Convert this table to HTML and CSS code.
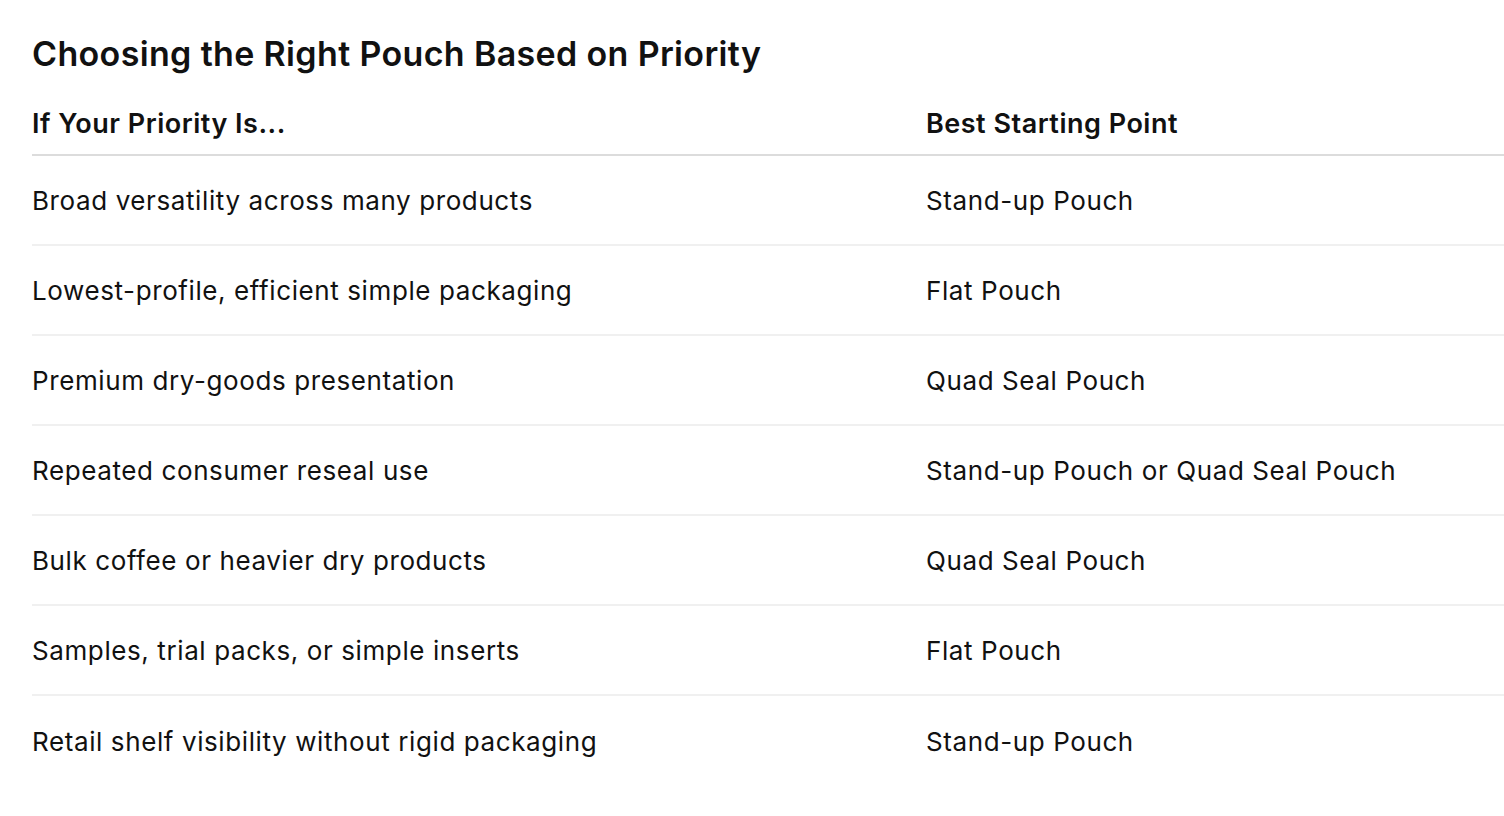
FILE: index.html
```html
<!DOCTYPE html>
<html>
<head>
<meta charset="utf-8">
<link rel="stylesheet" href="styles.css">
</head>
<body>
<div class="page">
  <h2 class="title">Choosing the Right Pouch Based on Priority</h2>
  <div class="table">
    <div class="row head">
      <div class="cell">If Your Priority Is...</div>
      <div class="cell">Best Starting Point</div>
    </div>
    <div class="row">
      <div class="cell">Broad versatility across many products</div>
      <div class="cell">Stand-up Pouch</div>
    </div>
    <div class="row">
      <div class="cell">Lowest-profile, efficient simple packaging</div>
      <div class="cell">Flat Pouch</div>
    </div>
    <div class="row">
      <div class="cell">Premium dry-goods presentation</div>
      <div class="cell">Quad Seal Pouch</div>
    </div>
    <div class="row">
      <div class="cell">Repeated consumer reseal use</div>
      <div class="cell">Stand-up Pouch or Quad Seal Pouch</div>
    </div>
    <div class="row">
      <div class="cell">Bulk coffee or heavier dry products</div>
      <div class="cell">Quad Seal Pouch</div>
    </div>
    <div class="row">
      <div class="cell">Samples, trial packs, or simple inserts</div>
      <div class="cell">Flat Pouch</div>
    </div>
    <div class="row">
      <div class="cell">Retail shelf visibility without rigid packaging</div>
      <div class="cell">Stand-up Pouch</div>
    </div>
  </div>
</div>
</body>
</html>
```

FILE: styles.css
```css
html, body {
  margin: 0;
  padding: 0;
  background: #ffffff;
}
body {
  font-family: Inter, "Noto Sans", sans-serif;
  color: #111111;
  overflow: hidden;
}
.page {
  padding: 32px 0 0 32px;
}
.title {
  margin: 0;
  font-size: 34px;
  font-weight: 600;
  line-height: 44px;
  letter-spacing: 0.35px;
}
.table {
  margin-top: 13px;
}
.row {
  display: grid;
  grid-template-columns: 894px 1fr;
  align-items: center;
  height: 90px;
  border-bottom: 2px solid #f0f0f0;
  box-sizing: border-box;
  font-size: 26px;
  font-weight: 400;
  letter-spacing: 0.6px;
}
.row:last-child {
  border-bottom: none;
}
.row.head {
  height: 67px;
  padding-top: 3px;
  font-size: 27px;
  font-weight: 600;
  letter-spacing: 0.5px;
  border-bottom: 2px solid #dcdcdc;
}
```
